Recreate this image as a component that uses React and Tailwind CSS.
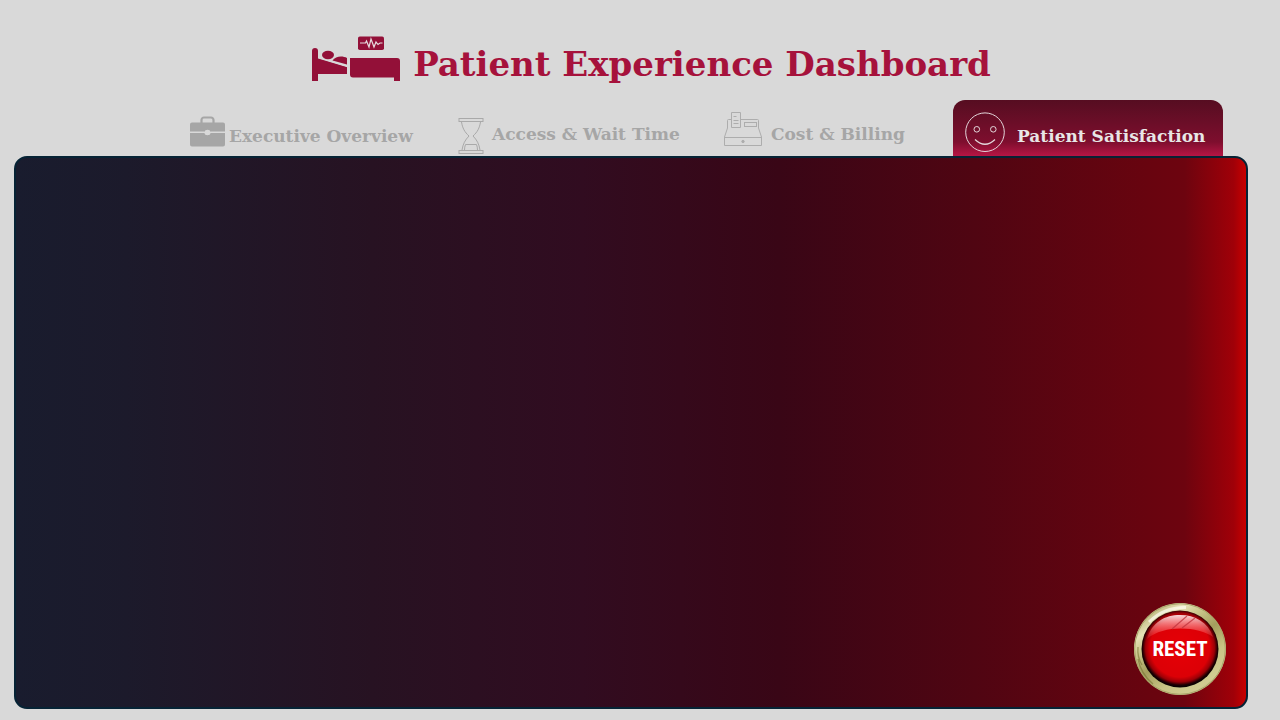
import React from 'react';

function BedIcon() {
  return (
    <svg viewBox="0 0 90 46" className="h-[46px] w-[90px] shrink-0" aria-hidden="true">
      <g fill="#931038">
        <path d="M1 15a3 3 0 0 1 6 0v8l29 8.500v6.500H7v7H1z" />
        <path d="M7 22.500l29 8.700V38H7z" />
        <ellipse cx="17" cy="19" rx="6" ry="4.200" />
        <path d="M21.500 24.500c3-4.500 10-5 14.500-2.500v6.500z" />
        <path d="M39 22h47a3 3 0 0 1 3 3v20h-6v-3.500H42a3 3 0 0 1-3-3z" />
        <rect x="47" y="0.500" width="26" height="13.500" rx="1.800" />
      </g>
      <path d="M49 7h5.500l1-2L58 11l2-8 3 8 2-5 2 2.500 2-1.500h2.500" fill="none" stroke="#e6dcdf" strokeWidth="1.200" />
    </svg>
  );
}

function BriefcaseIcon() {
  return (
    <svg viewBox="0 0 35 31" className="h-[31px] w-[35px]" fill="#a6a6a6" aria-hidden="true">
      <path d="M11.500 7V4A2.500 2.500 0 0 1 14 1.500h7A2.500 2.500 0 0 1 23.500 4v3" fill="none" stroke="#a6a6a6" strokeWidth="2.200" />
      <path d="M2 6.500h31a2 2 0 0 1 2 2V15.500H20v-1h-5v1H0V8.500a2 2 0 0 1 2-2z" />
      <path d="M0 17h14.500c0 3 6 3 6 0H35v11.500a2 2 0 0 1-2 2H2a2 2 0 0 1-2-2z" />
      <circle cx="17.500" cy="16.300" r="2.500" fill="#d9d9d9" />
    </svg>
  );
}

function HourglassIcon() {
  return (
    <svg viewBox="0 0 26 36" className="h-9 w-[26px]" fill="none" stroke="#a9a9a9" aria-hidden="true">
      <rect x="1" y="0.500" width="24" height="3" />
      <rect x="1" y="32.500" width="24" height="3" />
      <path d="M3.500 4c1 6 3 10 7.500 14-4 4-6 8-7 14M22.500 4c-1 6-3 10-7.500 14 4 4 6 8 7 14M6.500 32q0-3 1-5.500h11q1 2.500 1 5.500" />
    </svg>
  );
}

function RegisterIcon() {
  return (
    <svg viewBox="0 0 40 36" className="h-9 w-10" fill="none" stroke="#adadad" aria-hidden="true">
      <path d="M8 7.500H5.500q-1 0-1 1V16L1.500 25v8.500h37V25L35.500 16V8.500q0-1-1-1H18M1.500 25.500h37" />
      <path d="M8.500 15.500v-15h9v15zM10.500 4.500h3M10.500 8.500h5M10.500 11.500h5" />
      <rect x="21.500" y="10.500" width="12" height="4" />
      <circle cx="20" cy="29.500" r="1.200" fill="#adadad" />
    </svg>
  );
}

function SmileIcon() {
  return (
    <svg viewBox="0 0 40 40" className="size-10" fill="none" stroke="#e3d6da" aria-hidden="true">
      <circle cx="20" cy="20.200" r="19.300" />
      <circle cx="11.800" cy="17.300" r="2.800" />
      <circle cx="28.300" cy="17.300" r="2.800" />
      <path d="M10 27.500q10 9.500 20 0" strokeWidth="1.200" />
    </svg>
  );
}

function ResetButton() {
  return (
    <button type="button" className="relative size-[92px] cursor-pointer rounded-full">
      <svg viewBox="0 0 92 92" className="block size-full" aria-hidden="true">
        <defs>
          <linearGradient id="rim" x1="0.15" y1="0" x2="0.85" y2="1">
            <stop offset="0" stopColor="#a39e5c" />
            <stop offset="0.2" stopColor="#e6e3b8" />
            <stop offset="0.3" stopColor="#cfcb92" />
            <stop offset="0.5" stopColor="#a39e5c" />
            <stop offset="0.7" stopColor="#c9c585" />
            <stop offset="0.88" stopColor="#d0cc92" />
            <stop offset="1" stopColor="#9f9a5c" />
          </linearGradient>
          <radialGradient id="dome" cx="0.5" cy="0.48" r="0.52">
            <stop offset="0" stopColor="#e60006" />
            <stop offset="0.74" stopColor="#dc0006" />
            <stop offset="0.86" stopColor="#9c0006" />
            <stop offset="0.94" stopColor="#1c0002" />
            <stop offset="1" stopColor="#000" />
          </radialGradient>
          <linearGradient id="shine" x1="0" y1="0" x2="0" y2="1">
            <stop offset="0" stopColor="#fff" stopOpacity="0.85" />
            <stop offset="1" stopColor="#ff4a4a" stopOpacity="0.2" />
          </linearGradient>
        </defs>
        <circle cx="46" cy="46" r="46" fill="url(#rim)" />
        <circle cx="46" cy="46" r="45.300" fill="none" stroke="#a8a568" />
        <path d="M15 19Q30 4 52 4.500" fill="none" stroke="#fdfdf2" strokeWidth="3" opacity="0.7" />
        <path d="M4 56a43 43 0 0 0 15 25M4 44q-1 10 4 18" fill="none" stroke="#777332" strokeWidth="1.300" opacity="0.6" />
        <circle cx="46" cy="46" r="38.500" fill="url(#dome)" />
        <path d="M13 36C18 19 31 12 46 12s28 7 33 22C65 24 31 21 13 36z" fill="url(#shine)" />
        <path d="M38 26L53 13M48 25L61 15" stroke="#c2363f" strokeWidth="1.200" opacity="0.8" />
      </svg>
      <span className="absolute inset-0 flex items-center justify-center font-['Roboto_Condensed','Liberation_Sans_Narrow','Liberation_Sans',sans-serif] text-[21px] leading-none font-bold text-white">
        RESET
      </span>
    </button>
  );
}

const tabs = [
  { label: 'Executive Overview', Icon: BriefcaseIcon, box: 'gap-1 pt-4', text: 'pt-2' },
  { label: 'Access & Wait Time', Icon: HourglassIcon, box: 'gap-2 pt-[18px]', text: 'pt-1' },
  { label: 'Cost & Billing', Icon: RegisterIcon, box: 'gap-2 pt-3', text: 'pt-2.5' },
];

export default function App() {
  return (
    <div className="flex min-h-screen flex-col bg-[#d9d9d9] pr-8 pb-[11px] pl-3.5 font-['DejaVu_Serif',serif] font-bold">
      <header className="flex items-start justify-center gap-3 pt-9 pl-10 text-[#a6123c]">
        <BedIcon />
        <h1 className="pt-2 text-[34px] leading-10 whitespace-nowrap">Patient Experience Dashboard</h1>
      </header>
      <nav aria-label="Dashboard pages" className="mt-4 grid h-14 grid-cols-[268fr_265fr_230fr_270fr] pr-[25px] pl-44 text-[17px] leading-6 whitespace-nowrap">
        {tabs.map(({ label, Icon, box, text }) => (
          <a key={label} href="#" className={`flex items-start text-[#a6a6a6] ${box}`}>
            <Icon />
            <span className={text}>{label}</span>
          </a>
        ))}
        <a
          href="#"
          aria-current="page"
          className="flex items-start gap-3 rounded-t-xl bg-linear-to-b from-[#560d21] via-[#7e0e2e] via-75% to-[#b71544] pt-3 pl-3 text-[#e8e6e6]"
        >
          <SmileIcon />
          <span className="pt-3">Patient Satisfaction</span>
        </a>
      </nav>
      <main className="flex flex-1 items-end justify-end rounded-[13px] border-2 border-[#062335] bg-[linear-gradient(90deg,#191c2e_0%,#1c1a2b_9%,#271222_29%,#310c20_46%,#390616_62%,#500512_78%,#68040f_92%,#6d040f_95%,#a00008_99%,#c80000_100%)] pr-5 pb-3">
        <ResetButton />
      </main>
    </div>
  );
}
